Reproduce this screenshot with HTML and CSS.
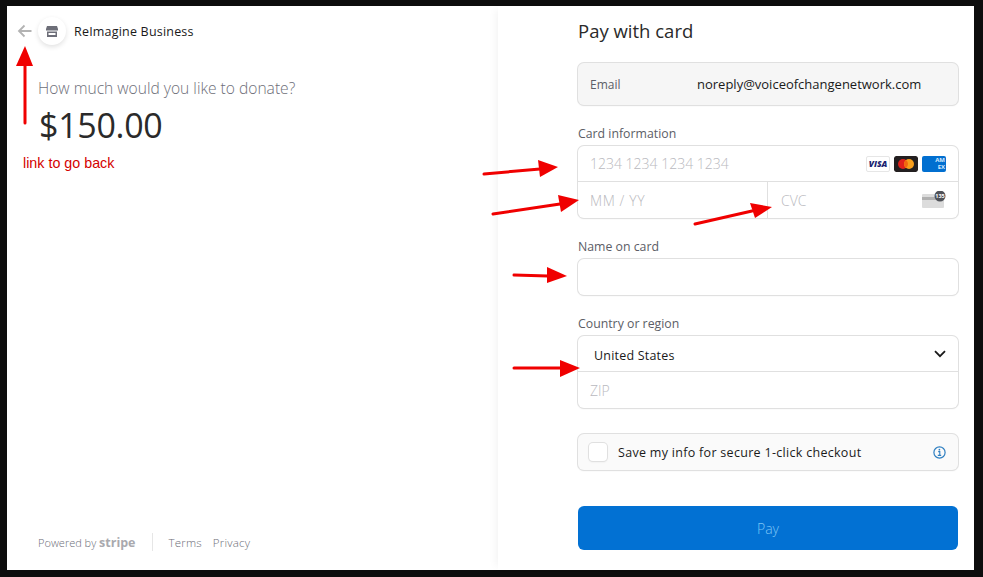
FILE: index.html
```html
<!DOCTYPE html>
<html lang="en">
<head>
    <meta charset="UTF-8">
    <title>Pay with card</title>
    <link rel="stylesheet" href="styles.css">
</head>
<body>
    <div class="frame">
        <section class="summary">
            <div class="merchant">
                <a href="#" class="back">
                    <svg width="16" height="14" viewBox="0 0 16 14"><path d="M14.5 7H2M7.5 1.5 2 7l5.5 5.5" fill="none" stroke="#b3b3b3" stroke-width="1.8"/></svg>
                </a>
                <span class="store">
                    <svg width="14" height="13" viewBox="0 0 14 13"><path d="M2 1h10l1 3v1.5H1V4zM2 6.5h10V12H2z" fill="#6d6e78"/><path d="M3.5 8h7v2h-7z" fill="#fff"/></svg>
                </span>
                <span class="merchant-name">ReImagine Business</span>
            </div>
            <div class="question">How much would you like to donate?</div>
            <div class="amount">$150.00</div>
            <footer class="powered">
                <span class="powered-by">Powered by <b class="stripe">stripe</b></span>
                <span class="sep"></span>
                <a href="#">Terms</a>
                <a href="#">Privacy</a>
            </footer>
        </section>

        <section class="payment">
            <h1>Pay with card</h1>

            <div class="box email-box">
                <span class="email-label">Email</span>
                <span class="email-value">noreply@voiceofchangenetwork.com</span>
            </div>

            <label class="field-label">Card information</label>
            <div class="box">
                <div class="row">
                    <span class="placeholder">1234 1234 1234 1234</span>
                    <span class="cards">
                        <span class="card visa">VISA</span>
                        <svg class="card" width="24" height="16" viewBox="0 0 24 16"><rect width="24" height="16" rx="2" fill="#231f20"/><circle cx="9" cy="8" r="5" fill="#e0201b"/><circle cx="15" cy="8" r="5" fill="#f79e1b"/><path d="M12 4a5 5 0 0 1 0 8 5 5 0 0 1 0-8z" fill="#f2660f"/></svg>
                        <span class="card amex">AM<br>EX</span>
                    </span>
                </div>
                <div class="row split">
                    <div class="cell expiry"><span class="placeholder">MM / YY</span></div>
                    <div class="cell cvc">
                        <span class="placeholder">CVC</span>
                        <svg width="24" height="18" viewBox="0 0 24 18"><rect y="3" width="22" height="14" rx="1" fill="#dcdcdc"/><rect y="6" width="22" height="3" fill="#b0b0b0"/><circle cx="18" cy="5" r="5.5" fill="#4f5157"/><text x="18" y="7" class="cvc-num">135</text></svg>
                    </div>
                </div>
            </div>

            <label class="field-label">Name on card</label>
            <div class="box single"></div>

            <label class="field-label">Country or region</label>
            <div class="box">
                <div class="row country">
                    <span>United States</span>
                    <svg width="12" height="8" viewBox="0 0 12 8"><path d="M1 1.2 6 6.2l5-5" fill="none" stroke="#1a1a1a" stroke-width="1.8"/></svg>
                </div>
                <div class="row"><span class="placeholder">ZIP</span></div>
            </div>

            <div class="box save-box">
                <span class="checkbox"></span>
                <span class="save-text">Save my info for secure 1-click checkout</span>
                <svg width="13" height="13" viewBox="0 0 13 13"><circle cx="6.5" cy="6.5" r="5.6" fill="none" stroke="#2f7fc1" stroke-width="1.2"/><path d="M5.2 5.6h1.6v3.6M4.8 9.4h3.4" fill="none" stroke="#2f7fc1" stroke-width="1.1"/><circle cx="6.4" cy="3.7" r=".85" fill="#2f7fc1"/></svg>
            </div>

            <button class="pay" type="button">Pay</button>
        </section>
    </div>

    <!-- red annotations on top of the screenshot -->
    <div class="note">link to go back</div>
    <svg class="arrows" width="983" height="577" viewBox="0 0 983 577">
        <g fill="#f00000" stroke="#f00000" stroke-width="3" stroke-linecap="round">
            <path d="M25 123V66"/>
            <path d="M484 174 540 169"/>
            <path d="M493 214 560 204"/>
            <path d="M695 224 752 211"/>
            <path d="M514 275 548 276"/>
            <path d="M514 368 561 368"/>
        </g>
        <g fill="#f00000">
            <path d="M25 46 33 66H16z"/>
            <path d="M558 167 540 177 538 160z"/>
            <path d="M579 200 561 212 558 195z"/>
            <path d="M772 207 755 218 750 203z"/>
            <path d="M567 276 547 283V267z"/>
            <path d="M580 368 560 377V360z"/>
        </g>
    </svg>
</body>
</html>
```

FILE: styles.css
```css
* {
    box-sizing: border-box;
}

html, body {
    margin: 0;
    height: 100%;
}

body {
    background-color: #0d0d0d;
    font-family: "Open Sans", "Noto Sans", sans-serif;
    color: #1a1a1a;
    overflow: hidden;
}

.frame {
    display: flex;
    height: 577px;
    padding: 6px 9px 7px 7px;
}

/* left side */
.summary {
    width: 491px;
    background-color: #fff;
    display: flex;
    flex-direction: column;
    padding: 11px 0 0 10px;
}

.merchant {
    display: flex;
    align-items: center;
    height: 28px;
}

.back {
    display: flex;
    width: 21px;
}

.store {
    width: 28px;
    height: 28px;
    border-radius: 50%;
    background-color: #fff;
    box-shadow: 0 2px 5px rgba(0, 0, 0, 0.12);
    display: flex;
    align-items: center;
    justify-content: center;
}

.merchant-name {
    margin-left: 8px;
    font-size: 12.5px;
    letter-spacing: 0.2px;
}

.question {
    margin: 33px 0 0 21px;
    font-size: 15.6px;
    font-weight: 300;
    line-height: 20px;
    color: #6d6e78;
}

.amount {
    margin: 2px 0 0 22px;
    font-size: 34px;
    letter-spacing: -0.3px;
    line-height: 50px;
    color: #2a2a2a;
}

.powered {
    margin-top: auto;
    margin-left: 21px;
    margin-bottom: 19px;
    display: flex;
    align-items: center;
    font-size: 11.5px;
    font-weight: 300;
    color: #6d6e78;
}

.powered-by {
    font-size: 11px;
}

.powered a {
    color: #6d6e78;
    text-decoration: none;
    letter-spacing: 0.2px;
    margin-right: 11px;
}

.stripe {
    font-size: 12.5px;
    font-weight: 700;
    color: #a9a9ae;
}

.sep {
    width: 1px;
    height: 18px;
    background-color: #e6e6e6;
    margin: 0 16px;
}

/* right side */
.payment {
    flex: 1;
    background-color: #fff;
    padding: 11px 16px 0 80px;
    box-shadow: -6px 0 8px -4px rgba(0, 0, 0, 0.05);
}

h1 {
    margin: 0;
    font-size: 18.5px;
    font-weight: 400;
    line-height: 28px;
    color: #2a2a2a;
}

.box {
    border-radius: 6px;
    background-color: #fff;
    box-shadow: 0 0 0 1px #e0e0e0, 0 1px 2px rgba(0, 0, 0, 0.07);
}

.field-label {
    display: block;
    font-size: 12.3px;
    line-height: 18px;
    margin: 20px 0 3px;
    color: #5c5d66;
}

.email-box {
    display: flex;
    align-items: center;
    height: 42px;
    margin-top: 18px;
    padding: 0 12px;
    background-color: #f6f6f6;
    font-size: 13px;
}

.email-label {
    width: 107px;
    font-size: 12px;
    color: #5c5d66;
}

.row {
    display: flex;
    align-items: center;
    justify-content: space-between;
    height: 37px;
    padding: 0 12px;
    font-size: 13px;
    border-top: 1px solid #e0e0e0;
}

.row:first-child {
    height: 35px;
    border-top: none;
}

.placeholder {
    color: #b9b9be;
    font-weight: 300;
    font-size: 14px;
}

.expiry .placeholder {
    letter-spacing: 0.6px;
}

.cards {
    display: flex;
    gap: 4px;
}

.card {
    width: 24px;
    height: 16px;
    border-radius: 2px;
    display: block;
}

.visa {
    border: 1px solid #e6e6e6;
    color: #1a1f71;
    font-size: 8.5px;
    font-weight: 800;
    font-style: italic;
    text-align: center;
    line-height: 14px;
}

.amex {
    background-color: #016fd0;
    color: #d6eaff;
    font-size: 6px;
    font-weight: 700;
    line-height: 7px;
    text-align: right;
    padding: 1px 1px 0 0;
}

.split {
    padding: 0;
}

.cell {
    display: flex;
    align-items: center;
    height: 100%;
}

.expiry {
    width: 190px;
    padding-left: 12px;
    border-right: 1px solid #e0e0e0;
}

.cvc {
    flex: 1;
    justify-content: space-between;
    padding: 0 12px 0 13px;
}

.cvc-num {
    font-size: 5.5px;
    font-weight: 700;
    fill: #fff;
    text-anchor: middle;
}

.single {
    height: 36px;
}

.row.country {
    padding: 3px 12px 0 16px;
    font-size: 12.5px;
    letter-spacing: 0.2px;
}

.country svg {
    margin-bottom: 2px;
}

.save-box {
    display: flex;
    align-items: center;
    height: 36px;
    margin-top: 26px;
    padding: 0 12px 0 11px;
    background-color: #fafafa;
}

.checkbox {
    width: 18px;
    height: 18px;
    border-radius: 4px;
    background-color: #fff;
    box-shadow: 0 0 0 1px #e0e0e0, 0 1px 2px rgba(0, 0, 0, 0.1);
}

.save-text {
    flex: 1;
    margin-left: 11px;
    font-size: 12.5px;
    letter-spacing: 0.3px;
}

.pay {
    display: block;
    width: 380px;
    height: 44px;
    margin-top: 36px;
    border: none;
    border-radius: 6px;
    background-color: #0271d3;
    color: #7cc4f5;
    font-family: inherit;
    font-size: 14px;
    font-weight: 300;
}

/* annotations */
.note {
    position: absolute;
    left: 23px;
    top: 155px;
    font-family: "Liberation Sans", Arial, sans-serif;
    font-size: 14.3px;
    line-height: 16px;
    color: #d40000;
}

.arrows {
    position: absolute;
    left: 0;
    top: 0;
    pointer-events: none;
}
```
